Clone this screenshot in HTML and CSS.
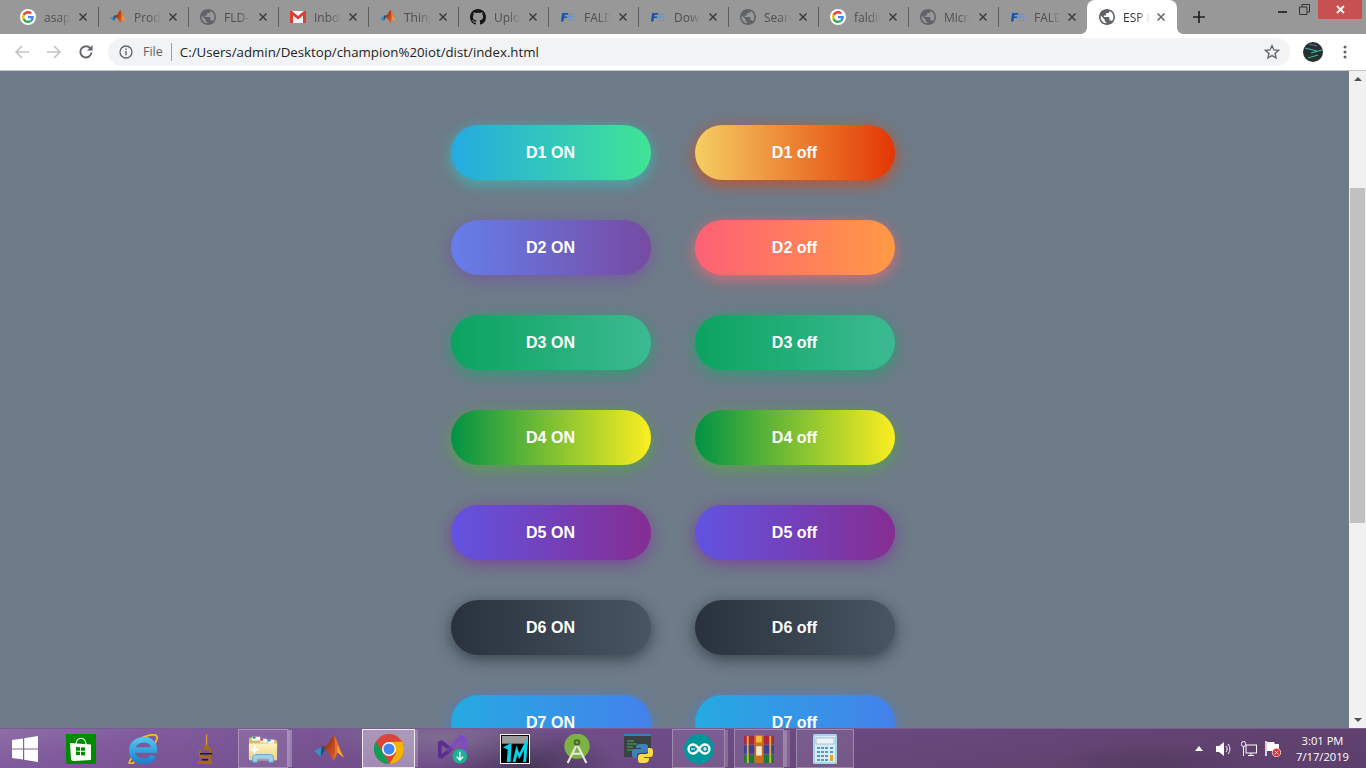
FILE: index.html
```html
<!DOCTYPE html>
<html lang="en">
<head>
<meta charset="utf-8">
<title>ESP 8266</title>
<link rel="stylesheet" href="styles.css">
</head>
<body>
<svg class="defs" aria-hidden="true">
  <defs>
    <linearGradient id="g-ie" x1="0" y1="0" x2="0" y2="1"><stop offset="0" stop-color="#4fc3f0"/><stop offset="1" stop-color="#1a86cf"/></linearGradient>
    <linearGradient id="g-folder" x1="0" y1="0" x2="0" y2="1"><stop offset="0" stop-color="#fdf3bd"/><stop offset="1" stop-color="#ecd27e"/></linearGradient>
    <linearGradient id="g-peak" x1="0" y1="0" x2="1" y2="1"><stop offset="0" stop-color="#7c1f10"/><stop offset="1" stop-color="#e8682a"/></linearGradient>
  </defs>
  <symbol id="i-google" viewBox="-8 -8 64 64">
    <circle cx="24" cy="24" r="32" fill="#fff"/>
    <path fill="#EA4335" d="M24 9.5c3.54 0 6.71 1.22 9.21 3.6l6.85-6.85C35.9 2.38 30.47 0 24 0 14.62 0 6.51 5.38 2.56 13.22l7.98 6.19C12.43 13.72 17.74 9.5 24 9.5z"/>
    <path fill="#4285F4" d="M46.98 24.55c0-1.57-.15-3.09-.38-4.55H24v9.02h12.94c-.58 2.96-2.26 5.48-4.78 7.18l7.73 6c4.51-4.18 7.09-10.36 7.09-17.65z"/>
    <path fill="#FBBC05" d="M10.53 28.59c-.48-1.45-.76-2.99-.76-4.59s.27-3.14.76-4.59l-7.98-6.19C.92 16.46 0 20.12 0 24c0 3.88.92 7.54 2.56 10.78l7.97-6.19z"/>
    <path fill="#34A853" d="M24 48c6.48 0 11.93-2.13 15.89-5.81l-7.73-6c-2.15 1.45-4.92 2.3-8.16 2.3-6.26 0-11.57-4.22-13.47-9.91l-7.98 6.19C6.51 42.62 14.62 48 24 48z"/>
  </symbol>
  <symbol id="i-matlab" viewBox="0 0 32 32">
    <path fill="#3f8fc4" d="M0 18l8-4 3 4-4 6z"/>
    <path fill="#1f4f80" d="M7 24l4-6 3-5-5 0-1 1z"/>
    <path fill="url(#g-peak)" d="M9 14l5-2 7-11c2 4 3 10 3 15l-3 13c-3-6-7-13-12-15z"/>
    <path fill="#e8702a" d="M21 1c3 4 7 15 11 24-3-2-6-5-7-5l-4 9c2-9 2-19 0-28z"/>
    <path fill="#f5b041" d="M25 12c2 5 4 9 7 13-3-2-6-5-7-5z"/>
  </symbol>
  <symbol id="i-globe" viewBox="2 2 20 20">
    <path fill="currentColor" d="M12 2C6.48 2 2 6.48 2 12s4.48 10 10 10 10-4.48 10-10S17.52 2 12 2zm-1 17.93c-3.95-.49-7-3.85-7-7.93 0-.62.08-1.21.21-1.79L9 15v1c0 1.1.9 2 2 2v1.93zm6.9-2.54c-.26-.81-1-1.39-1.9-1.39h-1v-3c0-.55-.45-1-1-1H8v-2h2c.55 0 1-.45 1-1V7h2c1.1 0 2-.9 2-2v-.41c2.93 1.19 5 4.06 5 7.41 0 2.08-.8 3.97-2.1 5.39z"/>
  </symbol>
  <symbol id="i-gmail" viewBox="0 0 16 12">
    <rect width="16" height="12" fill="#f2f2f2"/>
    <path fill="#d93f34" d="M0 0h2l6 5 6-5h2v12h-3V4.6L8 8.6 3 4.6V12H0z"/>
  </symbol>
  <symbol id="i-github" viewBox="0 0 16 16">
    <path fill="#161616" d="M8 0C3.58 0 0 3.58 0 8c0 3.54 2.29 6.53 5.47 7.59.4.07.55-.17.55-.38 0-.19-.01-.82-.01-1.49-2.01.37-2.53-.49-2.69-.94-.09-.23-.48-.94-.82-1.13-.28-.15-.68-.52-.01-.53.63-.01 1.08.58 1.23.82.72 1.21 1.87.87 2.33.66.07-.52.28-.87.51-1.07-1.78-.2-3.64-.89-3.64-3.95 0-.87.31-1.59.82-2.15-.08-.2-.36-1.02.08-2.12 0 0 .67-.21 2.2.82.64-.18 1.32-.27 2-.27.68 0 1.36.09 2 .27 1.53-1.04 2.2-.82 2.2-.82.44 1.1.16 1.92.08 2.12.51.56.82 1.27.82 2.15 0 3.07-1.87 3.75-3.65 3.95.29.25.54.73.54 1.48 0 1.07-.01 1.93-.01 2.2 0 .21.15.46.55.38A8.013 8.013 0 0016 8c0-4.42-3.58-8-8-8z"/>
  </symbol>
  <symbol id="i-fe" viewBox="0 0 18 12">
    <path fill="#1b55a8" d="M2.500 1.500h7L9 3.500H5.400L5 5.300h3.200l-.4 1.900H4.600L3.700 11H1z"/>
    <path fill="none" stroke="#5d93d8" stroke-width="1" d="M17 5.800h-7.500M16.500 4.200a4 4 0 0 0-7 1.600 4 4 0 0 0 6.800 3"/>
  </symbol>
  <symbol id="i-x" viewBox="0 0 8 8">
    <path stroke="currentColor" stroke-width="1.5" d="M.5.5l7 7M7.500.5l-7 7" fill="none"/>
  </symbol>
  <symbol id="i-win" viewBox="0 0 26 26">
    <path fill="#fff" d="M0 4l11-1.600V12.400H0zM12.200 2.200L26 0V12.400H12.200zM0 13.600h11v10L0 22zM12.200 13.600H26V26l-13.800-2.200z"/>
  </symbol>
  <symbol id="i-store" viewBox="0 0 30 30">
    <rect width="30" height="30" fill="#008a00"/>
    <path fill="none" stroke="#fff" stroke-width="1.200" d="M10 11c0-9 10-9 10 0"/>
    <path fill="#fff" d="M4 9l21 1.500V26L8 27c-2 0-3-1-3-2z"/>
    <path fill="#008a00" d="M10 13l4 .2v3.600l-4-.1zM15 13.200l4 .2v3.400l-4-.1zM10 17.600l4 .1v3.600l-4-.2zM15 17.700l4 .1v3.600l-4-.2z"/>
  </symbol>
  <symbol id="i-ie" viewBox="0 0 32 32">
    <path fill="none" stroke="#f2c21a" stroke-width="2" d="M5 24C-1 32 1 33 7 30M10 7c8-6 20-8 21-4 .5 2-1 5-3 8"/>
    <path fill="none" stroke="url(#g-ie)" stroke-width="6" d="M6 17h22c0-7-5-11-11-11S4 10.500 4 17.500 10 29 16.500 29c5 0 9-2 10.500-6"/>
  </symbol>
  <symbol id="i-scope" viewBox="0 0 16 30">
    <path fill="#a86a14" d="M8 0h3v12H8zM7 12h5v4H7zM2 16h3v8H2zM1 27h14v3H1zM12 14h2v13h-2zM3 22h9v2H3z"/>
    <path fill="#d89a3a" d="M9 1h1v10H9z"/>
    <path fill="#2a1a08" d="M3 19h12v1.500H3zM5 25h6v1.500H5z"/>
  </symbol>
  <symbol id="i-folder" viewBox="0 0 32 30">
    <path fill="#d8bd6a" d="M1 3h12l2 2h14c1 0 2 1 2 2v20H3c-1 0-2-1-2-2z"/>
    <path fill="#fff" d="M4 2h9v4H4zM13 4h7v4h-7zM21 5h7v4h-7z"/>
    <path fill="#21a53a" d="M5 2h3v2H5z"/><path fill="#d8392b" d="M13 4h3v2h-3z"/><path fill="#2f8ed8" d="M21 5h3v2h-3z"/>
    <path fill="url(#g-folder)" d="M1 9h30v16c0 1-1 2-2 2H3c-1 0-2-1-2-2z"/>
    <path fill="#9fd0ee" stroke="#5aa3d6" d="M5 29v-5c0-2 1-3 3-3h16c2 0 3 1 3 3v5h-5v-3H10v3z"/>
    <path fill="#fff" d="M7 10l1.500 4 4 1.500-4 1.500L7 21l-1.500-4-4-1.500 4-1.500z"/>
  </symbol>
  <symbol id="i-chrome" viewBox="0 0 30 30">
    <circle cx="15" cy="15" r="15" fill="#db4437"/>
    <path fill="#0f9d58" d="M15 30A15 15 0 0 1 2 7.500L9 19l6.500 11z"/>
    <path fill="#f4b400" d="M28 7.500A15 15 0 0 1 15.500 30L22 19l-7-11z"/>
    <circle cx="15" cy="15" r="7" fill="#fff"/>
    <circle cx="15" cy="15" r="5.500" fill="#4285f4"/>
  </symbol>
  <symbol id="i-vs" viewBox="0 0 33 32">
    <path fill="#5c2d91" d="M0 8l4-2 9 7-3 3-6-4v10l6-5 3 3-9 7-4-2z"/>
    <path fill="#7c4dbb" d="M13 13L24 0l8 4v18l-8 4V8l-7 8-4-3z"/>
    <path fill="#6a3aa8" d="M10 16l3-3 4 3-4 4z"/>
    <circle cx="24" cy="24" r="8" fill="#1bb392"/>
    <path stroke="#fff" stroke-width="1.600" fill="none" d="M24 19v9M20.500 24.500L24 28l3.500-3.500"/>
  </symbol>
  <symbol id="i-bvp" viewBox="0 0 31 31">
    <rect x=".5" y=".5" width="30" height="30" fill="#000" stroke="#fff"/>
    <rect x="2" y="2" width="27" height="8" fill="#9a9a9a"/>
    <path fill="#0bd0e8" d="M3 14l9-5-1 20H7l1-13zM13 29l4-17 3 8 7-14 2 1-2 22h-3l1-13-5 10-2-5-2 8z"/>
  </symbol>
  <symbol id="i-android" viewBox="0 0 28 32">
    <circle cx="14" cy="13" r="13.500" fill="#7cb342"/>
    <path fill="none" stroke="#e8e8e0" stroke-width="2.200" d="M14 11L4 31M14 11l10 20M8 21h12"/>
    <circle cx="14" cy="9" r="3.500" fill="#4a6b28"/>
    <circle cx="14" cy="9" r="1.300" fill="#7cb342"/>
  </symbol>
  <symbol id="i-python" viewBox="0 0 30 30">
    <rect y="1" width="27" height="22" fill="#3c4044"/>
    <rect y="0" width="27" height="2" fill="#2f7fc8"/>
    <path stroke="#46b04a" d="M3 7h7M3 10h10M3 13h6M3 16h8"/>
    <path fill="#3f80b8" d="M16 10h5c2 0 3 1 3 3v3c0 2-1 3-3 3h-5c-2 0-3 1-3 3v2h-2c-2 0-3-1-3-3v-3c0-2 1-3 3-3h6v-1h-5v-1c0-2 1-3 4-3z"/>
    <path fill="#ffd845" d="M24 14h2c2 0 3 1 3 3v3c0 2-1 3-3 3h-6v1h5v1c0 3-2 4-5 4h-3c-2 0-3-1-3-3v-3c0-2 1-3 3-3h5c2 0 2-1 2-3z"/>
  </symbol>
  <symbol id="i-arduino" viewBox="0 0 30 30">
    <circle cx="15" cy="15" r="15" fill="#00979c"/>
    <path fill="none" stroke="#fff" stroke-width="2.300" d="M15 15c-2-3-4-4.500-6-4.500a4.500 4.500 0 0 0 0 9c2 0 4-1.500 6-4.500 2-3 4-4.500 6-4.500a4.500 4.500 0 0 1 0 9c-2 0-4-1.500-6-4.500z"/>
    <path stroke="#fff" stroke-width="1.200" d="M7 15h4M19 15h4M21 13v4"/>
  </symbol>
  <symbol id="i-rar" viewBox="0 0 32 30">
    <rect y="1" width="32" height="9" fill="#b0253f"/>
    <rect y="11" width="32" height="9" fill="#3e3f96"/>
    <rect y="21" width="32" height="9" fill="#1f7a3a"/>
    <path fill="#c8701e" d="M11 0h10v30H11z"/>
    <rect x="13" y="12" width="6" height="10" fill="#f0e8d0"/>
    <rect x="13" y="1" width="6" height="7" fill="#f5b83a"/>
    <rect x="3" y="1" width="2" height="29" fill="#d8b23a"/>
    <rect x="27" y="1" width="2" height="29" fill="#d8b23a"/>
  </symbol>
  <symbol id="i-calc" viewBox="0 0 24 30">
    <rect width="24" height="30" rx="1.500" fill="#a8d4ea"/>
    <rect x="2" y="2" width="20" height="26" fill="#d6ecf6"/>
    <rect x="3" y="4" width="18" height="6" fill="#eef4f6" stroke="#7da6bc" stroke-width=".6"/>
    <path fill="#5c98bd" d="M4 13h3v2H4zM8 13h3v2H8zM12 13h3v2h-3zM4 17h3v2H4zM8 17h3v2H8zM12 17h3v2h-3zM4 21h3v2H4zM8 21h3v2H8zM12 21h3v2h-3zM4 25h3v2H4zM8 25h3v2H8zM12 25h3v2h-3z"/>
    <path fill="#e6a52e" d="M17 21h3v6h-3z"/>
    <path fill="#5c98bd" d="M17 13h3v2h-3zM17 17h3v2h-3z"/>
  </symbol>
</svg>

<header class="tabstrip">
  <div class="tab"><svg class="fav"><use href="#i-google"/></svg><span class="title">asap</span><svg class="close"><use href="#i-x"/></svg></div>
  <div class="tab"><svg class="fav"><use href="#i-matlab"/></svg><span class="title">Product</span><svg class="close"><use href="#i-x"/></svg></div>
  <div class="tab"><svg class="fav globe"><use href="#i-globe"/></svg><span class="title">FLD-1</span><svg class="close"><use href="#i-x"/></svg></div>
  <div class="tab"><svg class="fav"><use href="#i-gmail"/></svg><span class="title">Inbox</span><svg class="close"><use href="#i-x"/></svg></div>
  <div class="tab"><svg class="fav"><use href="#i-matlab"/></svg><span class="title">Things</span><svg class="close"><use href="#i-x"/></svg></div>
  <div class="tab"><svg class="fav"><use href="#i-github"/></svg><span class="title">Upload</span><svg class="close"><use href="#i-x"/></svg></div>
  <div class="tab"><svg class="fav"><use href="#i-fe"/></svg><span class="title">FALDI</span><svg class="close"><use href="#i-x"/></svg></div>
  <div class="tab"><svg class="fav"><use href="#i-fe"/></svg><span class="title">Down</span><svg class="close"><use href="#i-x"/></svg></div>
  <div class="tab"><svg class="fav globe"><use href="#i-globe"/></svg><span class="title">Search</span><svg class="close"><use href="#i-x"/></svg></div>
  <div class="tab"><svg class="fav"><use href="#i-google"/></svg><span class="title">faldic</span><svg class="close"><use href="#i-x"/></svg></div>
  <div class="tab"><svg class="fav globe"><use href="#i-globe"/></svg><span class="title">Micro</span><svg class="close"><use href="#i-x"/></svg></div>
  <div class="tab tab-last"><svg class="fav"><use href="#i-fe"/></svg><span class="title">FALDI</span><svg class="close"><use href="#i-x"/></svg></div>
  <div class="tab tab-active"><svg class="fav globe"><use href="#i-globe"/></svg><span class="title">ESP 8266</span><svg class="close"><use href="#i-x"/></svg></div>
  <svg class="newtab" viewBox="0 0 12 12"><path d="M6 0v12M0 6h12" stroke="#222" stroke-width="1.700"/></svg>
  <div class="winctl">
    <svg class="wmin" viewBox="0 0 9 3"><rect width="9" height="2" fill="#333"/></svg>
    <svg class="wmax" viewBox="0 0 11 11"><path d="M.5 3h7.500v7.500H.5zM3 3V.5h7.500V8H8" fill="none" stroke="#333"/></svg>
    <div class="wclose"><svg viewBox="0 0 9 9"><path d="M1 1l7 7M8 1L1 8" stroke="#fff" stroke-width="1.800"/></svg></div>
  </div>
</header>

<nav class="toolbar">
  <svg class="tool" viewBox="0 0 16 16"><path d="M15 8H2M8 2L2 8l6 6" fill="none" stroke="#c2c4c6" stroke-width="1.700"/></svg>
  <svg class="tool" viewBox="0 0 16 16"><path d="M1 8h13M8 2l6 6-6 6" fill="none" stroke="#c2c4c6" stroke-width="1.700"/></svg>
  <svg class="tool" viewBox="0 0 16 16"><path d="M13.500 8.500A5.600 5.600 0 1 1 12 4" fill="none" stroke="#5f6368" stroke-width="1.800"/><path d="M14.500 1v5.500H9z" fill="#5f6368"/></svg>
  <div class="omnibox">
    <svg class="info" viewBox="0 0 14 14"><circle cx="7" cy="7" r="6" fill="none" stroke="#5f6368" stroke-width="1.300"/><path d="M6.300 6h1.400v4.300H6.300zM6.300 3.500h1.400v1.400H6.300z" fill="#5f6368"/></svg>
    <span class="scheme">File</span>
    <span class="url">C:/Users/admin/Desktop/champion%20iot/dist/index.html</span>
    <svg class="star" viewBox="0 0 16 16"><path d="M8 1.600l1.900 4.300 4.700.4-3.600 3.100 1.100 4.600L8 11.600 3.900 14l1.100-4.600-3.600-3.100 4.700-.4z" fill="none" stroke="#5f6368" stroke-width="1.300"/></svg>
  </div>
  <svg class="avatar" viewBox="0 0 20 20"><circle cx="10" cy="10" r="10" fill="#26302f"/><path d="M2 6l12 3M8 11l11-3M5 16l10-3" stroke="#35c0b0" stroke-width="1"/><path d="M6 2l8 2" stroke="#7a5fa0"/></svg>
  <svg class="menu" viewBox="0 0 4 14"><circle cx="2" cy="2" r="1.500"/><circle cx="2" cy="7" r="1.500"/><circle cx="2" cy="12" r="1.500"/></svg>
</nav>

<div class="viewport">
  <main class="page">
    <button class="btn c1">D1 ON</button><button class="btn c2">D1 off</button>
    <button class="btn c3">D2 ON</button><button class="btn c4">D2 off</button>
    <button class="btn c5">D3 ON</button><button class="btn c5">D3 off</button>
    <button class="btn c6">D4 ON</button><button class="btn c6">D4 off</button>
    <button class="btn c7">D5 ON</button><button class="btn c7">D5 off</button>
    <button class="btn c8">D6 ON</button><button class="btn c8">D6 off</button>
    <button class="btn c9">D7 ON</button><button class="btn c9">D7 off</button>
  </main>
  <aside class="scrollbar">
    <div class="arrow arrow-up"></div>
    <div class="track"><div class="thumb"></div></div>
    <div class="arrow arrow-down"></div>
  </aside>
</div>

<footer class="taskbar">
  <div class="cell start"><svg class="ti win"><use href="#i-win"/></svg></div>
  <div class="cell"><svg class="ti"><use href="#i-store"/></svg></div>
  <div class="cell"><svg class="ti"><use href="#i-ie"/></svg></div>
  <div class="cell"><svg class="ti scope"><use href="#i-scope"/></svg></div>
  <div class="cell run run-folder"><svg class="ti"><use href="#i-folder"/></svg></div>
  <div class="cell cell-matlab"><svg class="ti"><use href="#i-matlab"/></svg></div>
  <div class="cell run active"><svg class="ti"><use href="#i-chrome"/></svg></div>
  <div class="cell cell-vs"><svg class="ti"><use href="#i-vs"/></svg></div>
  <div class="cell"><svg class="ti"><use href="#i-bvp"/></svg></div>
  <div class="cell"><svg class="ti"><use href="#i-android"/></svg></div>
  <div class="cell"><svg class="ti"><use href="#i-python"/></svg></div>
  <div class="cell run run-arduino"><svg class="ti"><use href="#i-arduino"/></svg></div>
  <div class="cell run run-rar"><svg class="ti"><use href="#i-rar"/></svg></div>
  <div class="cell run run-calc"><svg class="ti calc"><use href="#i-calc"/></svg></div>
  <div class="tray">
    <svg class="tray-up" viewBox="0 0 8 5"><path d="M4 0l4 5H0z" fill="#fff"/></svg>
    <svg class="tray-i" viewBox="0 0 16 16"><path d="M0 5h3l5-4v14l-5-4H0z" fill="#fff"/><path d="M10 5c1.500 2 1.500 4 0 6M12 3c2.500 3 2.500 7 0 10" fill="none" stroke="#fff"/></svg>
    <svg class="tray-i tray-net" viewBox="0 0 16 16"><rect x="5" y="4" width="10.500" height="8" fill="none" stroke="#fff"/><path d="M10 12v2M7 14.500h6" stroke="#fff"/><rect x=".5" y=".5" width="4" height="5" rx="2" fill="#5a3f6c" stroke="#fff"/><path d="M2.500 6v9" stroke="#fff"/></svg>
    <svg class="tray-i" viewBox="0 0 16 16"><path d="M1 0v15" stroke="#fff" stroke-width="1.500"/><path d="M2 1h7l1 2h4v7H2z" fill="#fff"/><circle cx="11.500" cy="11.500" r="4.200" fill="#e03030" stroke="#fff" stroke-width=".7"/><path d="M9.800 9.800l3.400 3.400M13.200 9.800l-3.400 3.400" stroke="#fff"/></svg>
    <div class="clock"><span>3:01 PM</span><span>7/17/2019</span></div>
  </div>
</footer>
</body>
</html>
```
FILE: styles.css
```css
* { box-sizing: border-box; }
html, body { margin: 0; height: 100%; }
body {
  height: 768px;
  overflow: hidden;
  display: flex;
  flex-direction: column;
  font-family: "Open Sans", "Noto Sans", sans-serif;
  background: #6e7b88;
}
.defs { width: 0; height: 0; flex: none; }

/* Tab strip */
.tabstrip {
  flex: none;
  height: 34px;
  display: flex;
  align-items: stretch;
  padding-left: 8px;
  background: #989898;
  color: #4f4f4f;
  font-size: 12px;
}
.tab {
  width: 90px;
  flex: none;
  height: 34px;
  display: flex;
  align-items: center;
  padding: 0 11px 0 12px;
  position: relative;
}
.tab::after {
  content: "";
  width: 1px;
  height: 20px;
  background: #5e5e5e;
  margin-left: 11px;
  margin-right: -12px;
  flex: none;
}
.tab-last::after { display: none; }
.tab-last .close { margin-right: 1px; }
.fav { width: 16px; height: 16px; flex: none; }
.globe { color: #5f6368; }
.title {
  width: 27px;
  flex: none;
  margin-left: 8px;
  overflow: hidden;
  white-space: nowrap;
  -webkit-mask-image: linear-gradient(to right, #000 55%, transparent 100%);
  mask-image: linear-gradient(to right, #000 55%, transparent 100%);
}
.close { width: 8px; height: 8px; margin-left: auto; color: #3c3c3c; flex: none; }
.tab-active {
  background: #fff;
  color: #333;
  border-radius: 8px 8px 0 0;
  margin-left: -1px;
}
.tab-active::after { display: none; }
.tab-active .close { color: #5f6368; margin-right: 1px; }
.tab-active::before {
  content: "";
  position: absolute;
  left: -6px;
  right: -6px;
  bottom: 0;
  height: 6px;
  background:
    radial-gradient(circle at 0 0, #989898 5.5px, #fff 6px) left top / 6px 6px no-repeat,
    radial-gradient(circle at 100% 0, #989898 5.5px, #fff 6px) right top / 6px 6px no-repeat;
}
.newtab { width: 12px; height: 12px; flex: none; margin: 11px 0 0 16px; }
.winctl { margin-left: auto; display: flex; align-items: flex-start; padding-right: 4px; }
.wmin { width: 9px; height: 3px; margin: 11px 12px 0 0; }
.wmax { width: 11px; height: 11px; margin: 4px 8px 0 0; }
.wclose {
  width: 44px;
  height: 19px;
  background: #c75050;
  display: flex;
  align-items: center;
  justify-content: center;
}
.wclose svg { width: 9px; height: 9px; }

/* Toolbar */
.toolbar {
  flex: none;
  height: 37px;
  background: #fff;
  border-bottom: 1px solid #c4c4c4;
  display: flex;
  align-items: center;
  padding: 0 0 1px 14px;
}
.tool { width: 16px; height: 16px; margin-right: 16px; flex: none; }
.omnibox {
  flex: none;
  width: 1182px;
  height: 28px;
  margin-left: -2px;
  border-radius: 14px;
  background: #f1f3f4;
  display: flex;
  align-items: center;
  padding: 0 10px 0 11px;
  font-size: 13px;
  color: #222;
}
.info { width: 14px; height: 14px; flex: none; }
.scheme {
  color: #5f6368;
  margin-left: 10px;
  padding-right: 8px;
  border-right: 1px solid #9aa0a6;
  line-height: 18px;
  font-size: 12.5px;
}
.url { margin-left: 8px; white-space: nowrap; font-size: 13.28px; line-height: 18px; padding-top: 1px; }
.star { width: 16px; height: 16px; margin-left: auto; }
.avatar { width: 20px; height: 20px; margin-left: 13px; flex: none; }
.menu { width: 4px; height: 14px; margin-left: 20px; fill: #5f6368; flex: none; }

/* Page */
.viewport {
  flex: none;
  height: 657px;
  display: flex;
  overflow: hidden;
}
.page {
  flex: 1;
  display: grid;
  grid-template-columns: 200px 200px;
  grid-auto-rows: 55px;
  gap: 40px 44px;
  align-content: start;
  padding: 54px 0 0 451px;
  height: 800px;
  background: #6e7b88;
}
.btn {
  display: block;
  width: 200px;
  height: 55px;
  border: 0;
  padding: 0 1px 0 0;
  border-radius: 50px;
  color: #fff;
  font: 600 16px "Liberation Sans", Arial, sans-serif;
  background-size: 300% 100%;
}
.c1 { background-image: linear-gradient(to right, #25aae1, #40e495, #30dd8a, #2bb673); box-shadow: 0 4px 15px 0 rgba(49,196,190,.75); }
.c2 { background-image: linear-gradient(to right, #f5ce62, #e43603, #fa7199, #e85a19); box-shadow: 0 4px 15px 0 rgba(229,66,10,.75); }
.c3 { background-image: linear-gradient(to right, #667eea, #764ba2, #6b8dd6, #8e37d7); box-shadow: 0 4px 15px 0 rgba(116,79,168,.75); }
.c4 { background-image: linear-gradient(to right, #fc6076, #ff9a44, #ef9d43, #e75516); box-shadow: 0 4px 15px 0 rgba(252,104,110,.75); }
.c5 { background-image: linear-gradient(to right, #0ba360, #3cba92, #30dd8a, #2bb673); box-shadow: 0 4px 15px 0 rgba(23,168,108,.75); }
.c6 { background-image: linear-gradient(to right, #009245, #fcee21, #00a8c5, #d9e021); box-shadow: 0 4px 15px 0 rgba(83,176,57,.75); }
.c7 { background-image: linear-gradient(to right, #6253e1, #852d91, #a3a1ff, #f24645); box-shadow: 0 4px 15px 0 rgba(126,52,161,.75); }
.c8 { background-image: linear-gradient(to right, #29323c, #485563, #2b5876, #4e4376); box-shadow: 0 4px 15px 0 rgba(37,47,57,.75); }
.c9 { background-image: linear-gradient(to right, #25aae1, #4481eb, #04befe, #3f86ed); box-shadow: 0 4px 15px 0 rgba(65,132,234,.75); }

/* Scrollbar */
.scrollbar {
  flex: none;
  width: 17px;
  background: #f1f1f1;
  display: flex;
  flex-direction: column;
  align-items: center;
}
.arrow { width: 0; height: 0; flex: none; border-left: 4px solid transparent; border-right: 4px solid transparent; }
.arrow-up { border-bottom: 4px solid #505050; margin: 6px 0 7px; }
.arrow-down { border-top: 4px solid #505050; margin: 7px 0 6px; }
.track { flex: 1; width: 100%; padding-top: 100px; }
.thumb { width: 15px; height: 335px; margin: 0 auto; background: #c1c1c1; }

/* Taskbar */
.taskbar {
  flex: none;
  height: 40px;
  display: flex;
  align-items: stretch;
  border-top: 1px solid #7a5a90;
  background:
    radial-gradient(120px 30px at 440px 8px, rgba(140,140,150,.45), transparent),
    radial-gradient(90px 40px at 530px 38px, rgba(50,45,60,.6), transparent),
    radial-gradient(100px 20px at 1150px 34px, rgba(60,50,70,.35), transparent),
    linear-gradient(168deg, #8e6ea6 0%, #7f5a9c 12%, #74508e 30%, #6c4a84 50%, #624270 80%, #5c3f6c 100%);
}
.cell {
  flex: none;
  width: 62px;
  display: flex;
  align-items: center;
  justify-content: center;
}
.start { width: 50px; }
.ti { width: 30px; height: 30px; }
.win { width: 26px; height: 26px; }
.scope { width: 16px; }
.calc { width: 24px; }
.run {
  width: 50px;
  background: rgba(255,255,255,.1);
  border: 1px solid rgba(255,255,255,.28);
  margin: 0;
}
.run-folder { margin-left: 2px; width: 50px; box-shadow: 3px 0 0 -1px rgba(255,255,255,.1), 5px 0 0 -1px rgba(255,255,255,.25); }
.cell-matlab { margin-left: 10px; }
.active {
  width: 53px;
  margin-left: 2px;
  background: rgba(255,255,255,.35);
  border: 1px solid rgba(255,255,255,.8);
  box-shadow: 4px 0 0 -1px rgba(255,255,255,.2);
}
.cell-vs { margin-left: 7px; }
.run-arduino { width: 53px; margin-left: 2px; box-shadow: 4px 0 0 -1px rgba(255,255,255,.2); }
.run-rar { margin-left: 9px; box-shadow: 4px 0 0 -1px rgba(255,255,255,.2), 7px 0 0 -1px rgba(255,255,255,.15); }
.run-calc { width: 58px; margin-left: 12px; }
.tray {
  margin-left: auto;
  display: flex;
  align-items: center;
  color: #fff;
  font-size: 11.2px;
  padding-right: 17px;
}
.tray-up { width: 8px; height: 5px; margin-right: 13px; }
.tray-i { width: 16px; height: 16px; margin-right: 9px; }
.tray-net { margin-right: 8px; }
.clock { display: flex; flex-direction: column; align-items: center; line-height: 16px; margin-left: 6px; }
```
